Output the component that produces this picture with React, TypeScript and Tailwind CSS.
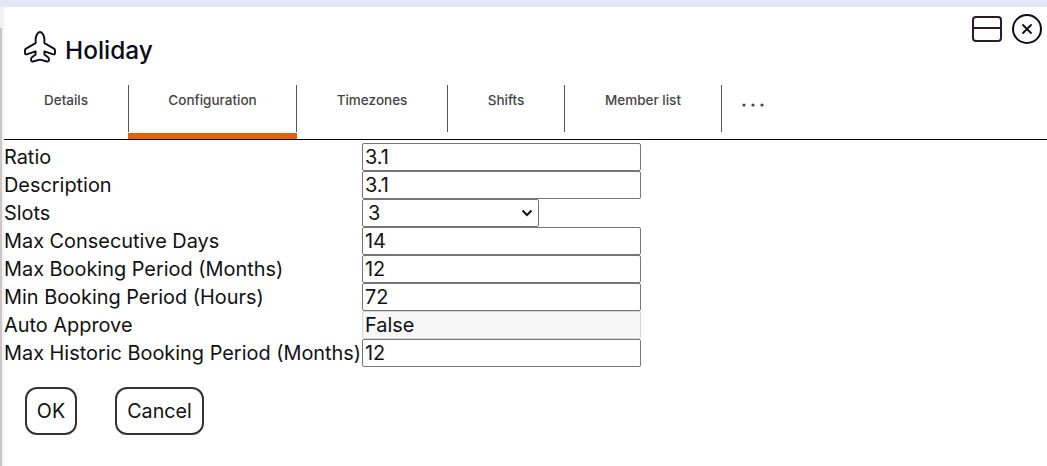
const font = "font-['Inter','Liberation_Sans',sans-serif]";

const rows: [string, string, string][] = [
  ["Ratio", "3.1", "input"],
  ["Description", "3.1", "input"],
  ["Slots", "3", "select"],
  ["Max Consecutive Days", "14", "input"],
  ["Max Booking Period (Months)", "12", "input"],
  ["Min Booking Period (Hours)", "72", "input"],
  ["Auto Approve", "False", "disabled"],
  ["Max Historic Booking Period (Months)", "12", "input"],
];

const tabs = [
  { label: "Details", w: "w-[125px]" },
  { label: "Configuration", w: "w-[168px]", active: true },
  { label: "Timezones", w: "w-[151px]" },
  { label: "Shifts", w: "w-[117px]" },
  { label: "Member list", w: "w-[157px]" },
];

function Plane() {
  return (
    <svg width="32" height="32" viewBox="0 0 32 32" fill="none" stroke="#0b0b1a" strokeWidth="1.9" strokeLinejoin="round">
      <path d="M16 1C13.6 1 11.6 5 11.6 8.6V12.2L2 17.6C1.3 18 1 18.6 1 19.4V22.2C1 23.1 1.8 23.6 2.7 23.3L11.6 20.4V23.4L8 26.2C7.4 26.7 7.1 27.2 7.1 27.9V29.3C7.1 30.2 7.9 30.8 8.8 30.5L16 28.6L23.2 30.5C24.1 30.8 24.9 30.2 24.9 29.3V27.9C24.9 27.2 24.6 26.7 24 26.2L20.4 23.4V20.4L29.3 23.3C30.2 23.6 31 23.1 31 22.2V19.4C31 18.6 30.7 18 30 17.6L20.4 12.2V8.6C20.4 5 18.4 1 16 1Z" />
    </svg>
  );
}

export default function App() {
  return (
    <div className={`${font} w-[1047px] h-[466px] overflow-hidden bg-white text-[#111111] flex flex-col`}>
      <div className="h-[7px] bg-[#e2e8f6] shrink-0" />
      <div className="flex flex-1 min-h-0">
        <div className="w-[4px] shrink-0 bg-[#f3f3f3] pt-[21px]">
          <div className="w-[2px] h-full bg-[#c8c8c8]" />
        </div>
        <div className="flex-1 min-w-0 flex flex-col">
          <div className="h-[78px] shrink-0 flex justify-between">
            <div className="flex items-center gap-[9px] pl-[20px] pt-[10px] h-[70px]">
              <Plane />
              <span className="text-[24.4px] font-medium leading-[30px] pt-[6px] text-[#0b0b1a]">Holiday</span>
            </div>
            <div className="flex items-start gap-[10px] pt-[7px] pr-[5px]">
              <div className="w-[30px] h-[26px] mt-[2px] rounded-[4px] border-2 border-[#2a1c2a] flex flex-col">
                <div className="h-[11px] border-b-2 border-[#2a1c2a]" />
              </div>
              <div className="w-[30px] h-[30px] rounded-full border-2 border-[#0b0b1a] flex items-center justify-center">
                <svg width="12" height="12" viewBox="0 0 12 12" stroke="#0b0b1a" strokeWidth="1.8" strokeLinecap="round">
                  <path d="M2 2L10 10M10 2L2 10" />
                </svg>
              </div>
            </div>
          </div>
          <div className="h-[55px] shrink-0 border-b border-black flex items-start">
            {tabs.map((t) => (
              <div key={t.label} className={`${t.w} h-[54px] shrink-0 flex flex-col relative`}>
                <div className="h-[47px] pt-[7px] border-r border-[#555555] text-center text-[13.5px] leading-[16px] font-medium text-[#444444]">
                  {t.label}
                </div>
                {t.active && <div className="absolute -left-[1px] right-0 bottom-0 h-[6px] bg-[#e46308]" />}
              </div>
            ))}
            <div className="pl-[19px] pt-[17px] text-[#444444]">
              <svg width="26" height="6" viewBox="0 0 26 6" fill="#444444">
                <circle cx="3" cy="3" r="1.6" />
                <circle cx="12" cy="3" r="1.6" />
                <circle cx="21" cy="3" r="1.6" />
              </svg>
            </div>
          </div>
          <div className="pt-[3px] flex flex-col">
            {rows.map(([label, value, kind]) => (
              <div key={label} className="flex h-[28px] items-stretch text-[19.9px] leading-[27px]">
                <div className="w-[358px] shrink-0 whitespace-nowrap text-[#111111] pt-[1px]">{label}</div>
                {kind === "select" ? (
                  <div className="w-[177px] border border-[#767676] rounded-[2px] flex items-center justify-between pl-[5px] pr-[5px]">
                    <span>{value}</span>
                    <svg width="12" height="8" viewBox="0 0 12 8" fill="none" stroke="#111111" strokeWidth="2">
                      <path d="M1.5 1.5L6 6L10.5 1.5" />
                    </svg>
                  </div>
                ) : (
                  <div
                    className={`w-[279px] border rounded-[2px] px-[2px] ${
                      kind === "disabled" ? "bg-[#f7f7f7] border-[#d4d4d4]" : "border-[#767676] bg-white"
                    }`}
                  >
                    {value}
                  </div>
                )}
              </div>
            ))}
          </div>
          <div className="flex gap-[38px] pl-[21px] pt-[20px] text-[19.7px]">
            <button className="h-[48px] w-[52px] pt-[2px] rounded-[12px] border-2 border-[#333333] bg-white">OK</button>
            <button className="h-[48px] w-[89px] pt-[2px] rounded-[12px] border-2 border-[#333333] bg-white">Cancel</button>
          </div>
        </div>
      </div>
    </div>
  );
}
